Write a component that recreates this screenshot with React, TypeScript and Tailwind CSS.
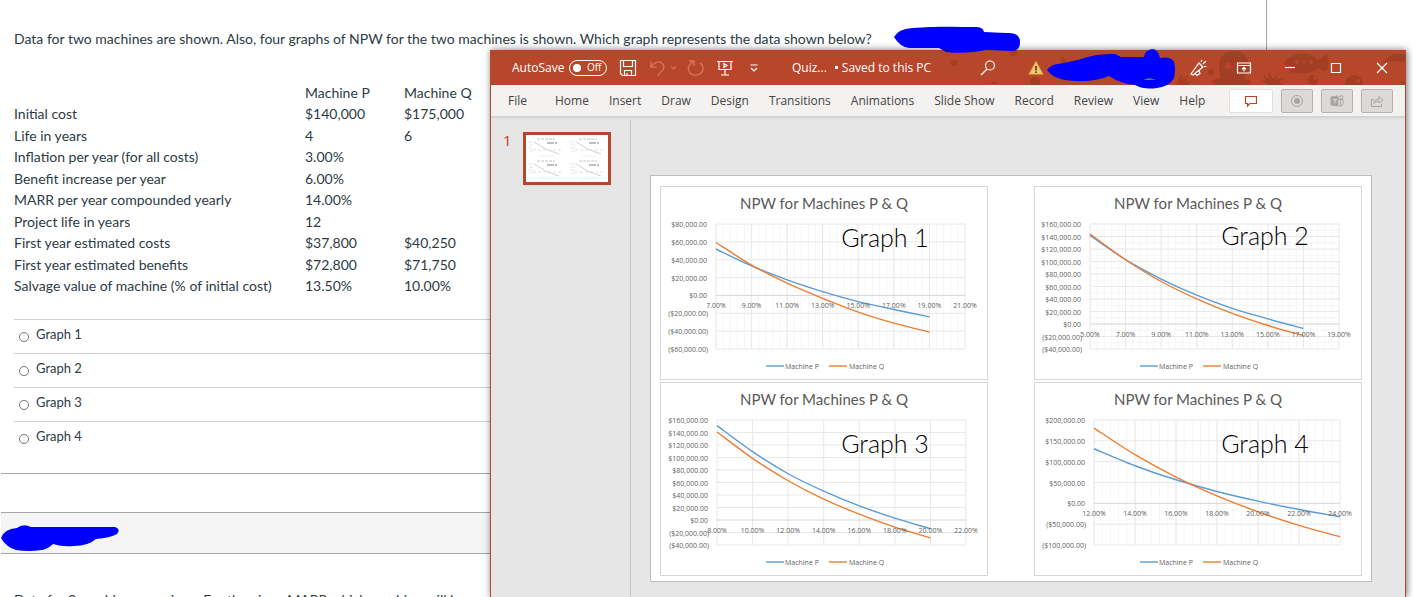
import type { ReactNode } from "react";

type Row = [label: string, p: string, q: string];

const rows: Row[] = [
  ["", "Machine P", "Machine Q"],
  ["Initial cost", "$140,000", "$175,000"],
  ["Life in years", "4", "6"],
  ["Inflation per year (for all costs)", "3.00%", ""],
  ["Benefit increase per year", "6.00%", ""],
  ["MARR per year compounded yearly", "14.00%", ""],
  ["Project life in years", "12", ""],
  ["First year estimated costs", "$37,800", "$40,250"],
  ["First year estimated benefits", "$72,800", "$71,750"],
  ["Salvage value of machine (% of initial cost)", "13.50%", "10.00%"],
];

const tabs = ["Home", "Insert", "Draw", "Design", "Transitions", "Animations", "Slide Show", "Record", "Review", "View", "Help"];

type ChartData = {
  name: string;
  left: number;
  right: number;
  nameX: number;
  nameY: number;
  xStart: number;
  xCount: number;
  yMax: number;
  yMin: number;
  yStep: number;
  minorX?: boolean;
  minorY?: boolean;
  p: number[];
  q: number[];
};

// p and q hold one NPW value for each 2% step of the rate
const charts: ChartData[] = [
  {
    name: "Graph 1", left: 56, right: 305, nameX: 225, nameY: 61, xStart: 7, xCount: 7, yMax: 80000, yMin: -60000, yStep: 20000, minorX: true,
    p: [52000, 33000, 17500, 4200, -7000, -15700, -24000],
    q: [59300, 34000, 13700, -3300, -18700, -31000, -41000],
  },
  {
    name: "Graph 2", left: 56, right: 305, nameX: 231, nameY: 59, xStart: 5, xCount: 7, yMax: 160000, yMin: -40000, yStep: 20000, minorX: true, minorY: true,
    p: [141800, 102900, 71900, 46200, 25000, 8300, -7200],
    q: [144000, 102800, 68000, 40300, 16900, -2400, -18400],
  },
  {
    name: "Graph 3", left: 57, right: 306, nameX: 225, nameY: 71, xStart: 8, xCount: 7, yMax: 160000, yMin: -40000, yStep: 20000,
    p: [150900, 109300, 74000, 46200, 22700, 3000, -14000],
    q: [140800, 98600, 62800, 33400, 9400, -11400, -28500],
  },
  {
    name: "Graph 4", left: 60, right: 306, nameX: 231, nameY: 71, xStart: 12, xCount: 6, yMax: 200000, yMin: -100000, yStep: 50000, minorX: true,
    p: [131000, 90200, 56500, 28500, 5300, -14700, -32300],
    q: [180700, 116700, 63000, 18000, -20300, -53000, -80400],
  },
];

const TOP = 38;
const BOTTOM = 163;

function money(v: number) {
  const s = "$" + Math.abs(v).toLocaleString("en-US", { minimumFractionDigits: 2 });
  return v < 0 ? `(${s})` : s;
}

function curve(pts: [number, number][]) {
  let d = `M${pts[0][0]} ${pts[0][1]}`;
  for (let i = 0; i < pts.length - 1; i++) {
    const a = pts[i - 1] ?? pts[i];
    const b = pts[i];
    const c = pts[i + 1];
    const e = pts[i + 2] ?? c;
    d += `C${b[0] + (c[0] - a[0]) / 6} ${b[1] + (c[1] - a[1]) / 6} ${c[0] - (e[0] - b[0]) / 6} ${c[1] - (e[1] - b[1]) / 6} ${c[0]} ${c[1]}`;
  }
  return d;
}

function range(n: number) {
  return Array.from({ length: n }, (_, i) => i);
}

function Chart({ c }: { c: ChartData }) {
  const dx = (c.right - c.left) / c.xCount;
  const y = (v: number) => TOP + ((c.yMax - v) / (c.yMax - c.yMin)) * (BOTTOM - TOP);
  const yCount = (c.yMax - c.yMin) / c.yStep;
  const line = (vals: number[]) => curve(vals.map((v, i) => [c.left + i * dx, y(v)]));

  return (
    <svg viewBox="1 1 326 192" className="h-[194px] w-[328px] border border-[#d5d5d5] bg-white font-['Lato',sans-serif]" role="img" aria-label={c.name}>
      {c.minorX && range(c.xCount * 5).map((i) => (
        <line key={i} x1={c.left + (i * dx) / 5} x2={c.left + (i * dx) / 5} y1={TOP} y2={BOTTOM} stroke="#f6f6f6" />
      ))}
      {c.minorY && range(yCount * 2).map((i) => (
        <line key={i} x1={c.left} x2={c.right} y1={TOP + (i * (BOTTOM - TOP)) / yCount / 2} y2={TOP + (i * (BOTTOM - TOP)) / yCount / 2} stroke="#f6f6f6" />
      ))}
      {range(c.xCount + 1).map((i) => (
        <line key={i} x1={c.left + i * dx} x2={c.left + i * dx} y1={TOP} y2={BOTTOM} stroke="#e8e8e8" />
      ))}
      {range(yCount + 1).map((i) => {
        const v = c.yMax - i * c.yStep;
        return <line key={i} x1={c.left} x2={c.right} y1={y(v)} y2={y(v)} stroke={v === 0 ? "#d6d6d6" : "#e8e8e8"} />;
      })}
      <path d={line(c.p)} fill="none" stroke="#5b9bd5" strokeWidth="1.4" />
      <path d={line(c.q)} fill="none" stroke="#ed7d31" strokeWidth="1.4" />
      <g fill="#626262" fontSize="7" className="font-['Open_Sans',sans-serif]">
        {range(yCount + 1).map((i) => {
          const v = c.yMax - i * c.yStep;
          return <text key={i} x={c.left - (v < 0 ? 8 : 9)} y={y(v) + 3} textAnchor="end">{money(v)}</text>;
        })}
        {range(c.xCount + 1).map((i) => (
          <text key={i} x={c.left + i * dx} y={y(0) + 13} textAnchor="middle">{(c.xStart + i * 2).toFixed(2)}%</text>
        ))}
        <line x1="106" x2="124" y1="180" y2="180" stroke="#5b9bd5" strokeWidth="1.4" />
        <text x="125" y="183">Machine P</text>
        <line x1="169" x2="187" y1="180" y2="180" stroke="#ed7d31" strokeWidth="1.4" />
        <text x="189" y="183">Machine Q</text>
      </g>
      <text x="164" y="23" textAnchor="middle" fontSize="15" fill="#595959">NPW for Machines P &amp; Q</text>
      <text x={c.nameX} y={c.nameY} textAnchor="middle" fontSize="25" fontWeight="300" fill="#000">{c.name}</text>
    </svg>
  );
}

function Thumbnail() {
  return (
    <svg viewBox="0 0 82 47" className="h-[47px] w-[82px] bg-white" aria-hidden>
      {[[2, 3], [44, 3], [2, 25], [44, 25]].map(([x, y], i) => (
        <g key={i} transform={`translate(${x} ${y})`} fill="none" stroke="#d2d2d2">
          <path d="M9 1h18" strokeDasharray="3 1" stroke="#c4c4c4" />
          <path d="M0 4h5M1 7h4M0 10h5M1 13h4" stroke="#e8e8e8" />
          <path d="M6 4q13 9 25 12" stroke="#bdbdbd" strokeWidth=".7" />
          <path d="M5 12h30" strokeDasharray="3 2" strokeWidth=".7" />
          <path d="M19 5h11" strokeDasharray="7 1 2" stroke="#aaa" strokeWidth="1.4" />
          <path d="M12 18h14" stroke="#ededed" strokeWidth=".7" />
        </g>
      ))}
    </svg>
  );
}

function TitleButton({ label, className, children }: { label: string; className: string; children: ReactNode }) {
  return (
    <button aria-label={label} className={`flex h-full shrink-0 items-center justify-center ${className}`}>
      <svg width="18" height="18" viewBox="0 0 18 18" fill="none" stroke="currentColor" strokeWidth="1.2">{children}</svg>
    </button>
  );
}

// sea creatures behind the right end of the title bar
function TitlePattern() {
  return (
    <svg viewBox="0 0 476 35" className="absolute top-0 right-0 h-[35px] w-[476px]" fill="#9d3c23" aria-hidden>
      <g opacity=".8">
        <circle cx="25" cy="13" r="3" />
        <circle cx="84" cy="2" r="4" />
        <path d="M118 17l4-5M61 34l4-3 5 3z" />
        <circle cx="106" cy="32" r="5" />
        <path d="M132 6l4 2 1 5-4-1zM140 11l5 1-2 4z" />
        <path d="M250 27l4-3-2 6 7-4-3 6 8-1-5 4h-12z" />
        <path d="M290 15a15 14 0 0 1 30 0c0 6-4 9-4 14l7 2-3 4h-33l-5-4 9-3c1-4-1-8-1-13z" />
        <circle cx="282" cy="22" r="3" />
        <path d="M334 24l6 5-1-7 5 7 5-5-2 6 9-3-6 5 5 3h-15l-9-5 6 1z" />
        <path d="M355 13c6-10 24-13 34-3l9-6c3 6 2 15-2 17l-7-3c-8 8-28 8-34-5z" />
        <path d="M363 20l-4 4 8-2z" />
        <circle cx="384" cy="30" r="5" />
        <circle cx="425" cy="34" r="9" />
        <path d="M452 13l12-9h12v8l-10-1z" />
        <circle cx="474" cy="33" r="2" />
      </g>
      <g fill="#b7472a">
        <circle cx="368" cy="12" r="2" />
        <circle cx="375" cy="12" r="2" />
        <circle cx="382" cy="12" r="2" />
        <circle cx="299" cy="16" r="3" />
        <circle cx="386" cy="28" r="2" />
        <circle cx="429" cy="31" r="2" />
      </g>
    </svg>
  );
}

function QuizPage() {
  return (
    <main className="mr-[146px] ml-px text-[#2d3b45]">
      <article className="border-r border-b border-[#a5a5a5] pt-[29px] pb-[18px] pl-[13px]">
        <p className="h-5 text-sm whitespace-nowrap">
          Data for two machines are shown. Also, four graphs of NPW for the two machines is shown. Which graph represents the data shown below?
        </p>
        <table className="mt-[33px] h-[215px] table-fixed border-collapse text-left text-sm">
          <colgroup>
            <col className="w-[291px]" />
            <col className="w-[99px]" />
            <col className="w-[85px]" />
          </colgroup>
          <tbody>
            {rows.map(([label, p, q]) => (
              <tr key={label}>
                <th className="p-0 font-normal whitespace-nowrap">{label}</th>
                <td className="p-0">{p}</td>
                <td className="p-0">{q}</td>
              </tr>
            ))}
          </tbody>
        </table>
        <fieldset className="mt-[22px]">
          {["Graph 1", "Graph 2", "Graph 3", "Graph 4"].map((a) => (
            <label key={a} className="flex h-[34px] items-center gap-[7px] border-t border-[#cfd1d3] pb-1 pl-[5px] text-[13px]">
              <input type="radio" name="answer" className="mt-1 h-[10px] w-[10px] appearance-none rounded-full border border-[#767676] bg-white" />
              {a}
            </label>
          ))}
        </fieldset>
      </article>
      <article className="mt-[38px] border-t border-r border-[#a5a5a5]">
        <header className="h-[41px] border-b border-[#a5a5a5] bg-[#f5f5f5]" />
        <p className="pt-[36px] pl-[13px] text-sm whitespace-nowrap">
          Data for 3 machines are given. For the given MARR which machine will be
        </p>
      </article>
    </main>
  );
}

function TitleBar() {
  return (
    <header className="relative flex h-[35px] shrink-0 items-center bg-[#b7472a] pl-[21px] text-xs whitespace-nowrap text-white">
      <TitlePattern />
      <div className="relative flex h-full w-full items-center">
        <span id="autosave" className="w-[51px]">AutoSave</span>
        <button role="switch" aria-checked="false" aria-labelledby="autosave" className="ml-[6px] flex h-4 w-[38px] items-center gap-[6px] rounded-full border border-white pl-[3px] text-[10px]">
          <span className="h-2 w-2 rounded-full bg-white" />
          Off
        </button>
        <TitleButton label="Save" className="w-[42px]">
          <path d="M1.5 1.5h15v15h-13l-2-2zM4.500 1.500v6h9v-6M5.500 16.500v-5h7v5M8 16v-2" />
        </TitleButton>
        <TitleButton label="Undo" className="w-[17px] text-[#d9735a]">
          <path d="M2 2v6h6M2 8c3-5 8-7 12-4 4 4 1 7-5 13" strokeWidth="1.4" />
        </TitleButton>
        <TitleButton label="Undo list" className="w-[15px] text-[#d9735a]">
          <path d="M6 7l3 3 3-3" strokeWidth="1.4" />
        </TitleButton>
        <TitleButton label="Redo" className="w-[30px] text-[#d9735a]">
          <path d="M2 2h5v5M7 2.500C1 5 0 10 3 14c3 3 9 3 12-1 2-4 1-7-2-9" strokeWidth="1.4" />
        </TitleButton>
        <TitleButton label="Start slide show" className="w-[27px]">
          <path d="M1 2.500h16M3 2.500v8h12v-8M9 10.500v5M5 16h8M8 4.500v4l3-2z" />
        </TitleButton>
        <TitleButton label="Customize toolbar" className="w-[31px]">
          <path d="M5.500 6h7M6 9l3 3 3-3" />
        </TitleButton>
        <span className="ml-[23px]">Quiz...</span>
        <span className="ml-2 flex items-center gap-1"><span className="h-[3px] w-[3px] bg-white" />Saved to this PC</span>
        <div className="ml-auto flex h-full items-center">
          <TitleButton label="Search" className="w-[50px]">
            <circle cx="11" cy="6.500" r="4.500" />
            <path d="M8 10l-6 6" />
          </TitleButton>
          <TitleButton label="Account warning" className="w-[46px]">
            <path d="M9 3l6.500 12h-13z" fill="#f8c96a" stroke="#f2b35b" />
            <path d="M9 7v4.500M9 12.500v1.500" stroke="#333" strokeWidth="1.500" />
          </TitleButton>
          <div className="w-[116px]" />
          <TitleButton label="Coming soon" className="w-[46px]">
            <path d="M2 15L10 4l4 4-10 8zM6 14.500l2 2 3-2-1-3M12 3l1-2M14 5l3-3M15 7.500h2.500" />
          </TitleButton>
          <TitleButton label="Ribbon display options" className="w-[46px]">
            <path d="M2.500 4h13v10h-13zM2.500 6.500h13M9 12.500v-4M7 10.300l2-2 2 2" />
          </TitleButton>
          <TitleButton label="Minimize" className="w-[46px]">
            <path d="M4 8.500h10" />
          </TitleButton>
          <TitleButton label="Maximize" className="w-[46px]">
            <path d="M4.500 4.500h9v9h-9z" />
          </TitleButton>
          <TitleButton label="Close" className="w-[46px]">
            <path d="M4 4l10 10M14 4L4 14" />
          </TitleButton>
        </div>
      </div>
    </header>
  );
}

function RibbonTabs() {
  const grey = "flex h-6 w-8 items-center justify-center rounded-[2px] border border-[#b5b3b2] bg-[#dcdad9] text-[#a8a6a5]";
  return (
    <nav className="flex h-[31px] shrink-0 items-center bg-[#f3f2f1] pr-3 pl-[17px] text-xs whitespace-nowrap text-[#444]">
      <button className="mr-7">File</button>
      <div className="flex gap-5">
        {tabs.map((t) => <button key={t}>{t}</button>)}
      </div>
      <div className="ml-auto flex items-center gap-2">
        <button aria-label="Comments" className="flex h-6 w-11 items-center justify-center rounded-[2px] border border-[#e1dfdd] bg-white text-[#b7472a]">
          <svg width="14" height="14" viewBox="0 0 14 14" fill="none" stroke="currentColor" strokeWidth="1.200"><path d="M1.500 2.500h11v7H6l-2.500 2.500V9.500h-2z" /></svg>
        </button>
        <button aria-label="Record" className={grey}>
          <svg width="14" height="14" viewBox="0 0 14 14" fill="none" stroke="currentColor"><circle cx="7" cy="7" r="5.500" /><circle cx="7" cy="7" r="3" fill="currentColor" stroke="none" /></svg>
        </button>
        <button aria-label="Present in Teams" className={grey}>
          <svg width="14" height="14" viewBox="0 0 14 14" fill="none" stroke="currentColor">
            <path d="M1 3l7-1v10l-7-1z" fill="currentColor" />
            <path d="M3 5.500h4M5 5.500v4" stroke="#dcdad9" />
            <circle cx="11.500" cy="3" r="1.500" />
            <path d="M8 5.500h5v4c0 2-2 3-4 2.500M10.500 5.500v6" />
          </svg>
        </button>
        <button aria-label="Share" className={grey}>
          <svg width="14" height="14" viewBox="0 0 14 14" fill="none" stroke="currentColor"><path d="M4 5.500H1.500v7h10V10M4 9.500c0-3 2-4.500 5-4.500V2.500L13 6 9 9V7C7 7 5 7.500 4 9.500z" /></svg>
        </button>
      </div>
    </nav>
  );
}

function SlideWindow() {
  return (
    <section className="absolute top-[50px] right-[7px] bottom-0 left-[490px] flex flex-col border-x border-[#b7472a] bg-[#e6e6e6] font-['Open_Sans',sans-serif] shadow-[1px_0_7px_rgba(0,0,0,0.55)]">
      <TitleBar />
      <RibbonTabs />
      <div className="h-1 shrink-0 bg-linear-to-b from-[#cfcfcf] to-[#e6e6e6]" />
      <div className="flex min-h-0 flex-1">
        <aside className="flex w-[140px] shrink-0 items-start gap-3 border-r border-[#c6c6c6] pt-3 pl-3">
          <span className="w-2 text-[15px] leading-4 text-[#c43e1c]">1</span>
          <button aria-label="Slide 1" className="border-[3px] border-[#b7472a]">
            <Thumbnail />
          </button>
        </aside>
        <div className="min-w-0 flex-1 pt-[55px] pr-[33px] pl-[19px]">
          <div className="grid grid-cols-[auto_auto] justify-between gap-y-[2px] border border-[#bcbcbc] bg-white px-[9px] pt-[10px] pb-[5px]">
            {charts.map((c) => <Chart key={c.name} c={c} />)}
          </div>
        </div>
      </div>
    </section>
  );
}

export default function App() {
  return (
    <div className="relative h-screen overflow-hidden bg-white font-['Lato',sans-serif]">
      <QuizPage />
      <SlideWindow />
      <svg viewBox="0 0 126 27" className="absolute top-[26px] left-[894px] h-[27px] w-[126px]" fill="#00f" aria-hidden>
        <path d="M0 11Q4 3 18 2C45 0 60 1 82 1q7 0 8 5l22 1q14-1 14 9 0 9-8 9l-26-1c-10 2-24 4-40 2l-7-4-30 0Q6 21 0 11z" />
      </svg>
      <svg viewBox="0 0 129 40" className="absolute top-[49px] left-[1047px] h-[40px] w-[129px]" fill="#00f" aria-hidden>
        <path d="M0 21q3-5 11-6l20-4q18-7 37-6l6 3 23 0Q98 1 105 0q6 0 8 9 11-2 14 4 2 8 0 16-4 8-17 10-13 2-22-3-14-1-26-9-14 6-32 5Q8 32 0 21z" />
        <path d="M96 31l6-2 7 2z" fill="#5a7f6a" />
      </svg>
      <svg viewBox="0 0 118 26" className="absolute top-[525px] left-px h-[26px] w-[118px]" fill="#00f" aria-hidden>
        <path d="M0 13Q3 4 16 3q6-5 14-1h84q6 2 2 7-7 4-21 5-8 7-22 7-12 1-21-2-5 5-11 6-14 2-26 0Q5 22 0 13z" />
      </svg>
    </div>
  );
}
